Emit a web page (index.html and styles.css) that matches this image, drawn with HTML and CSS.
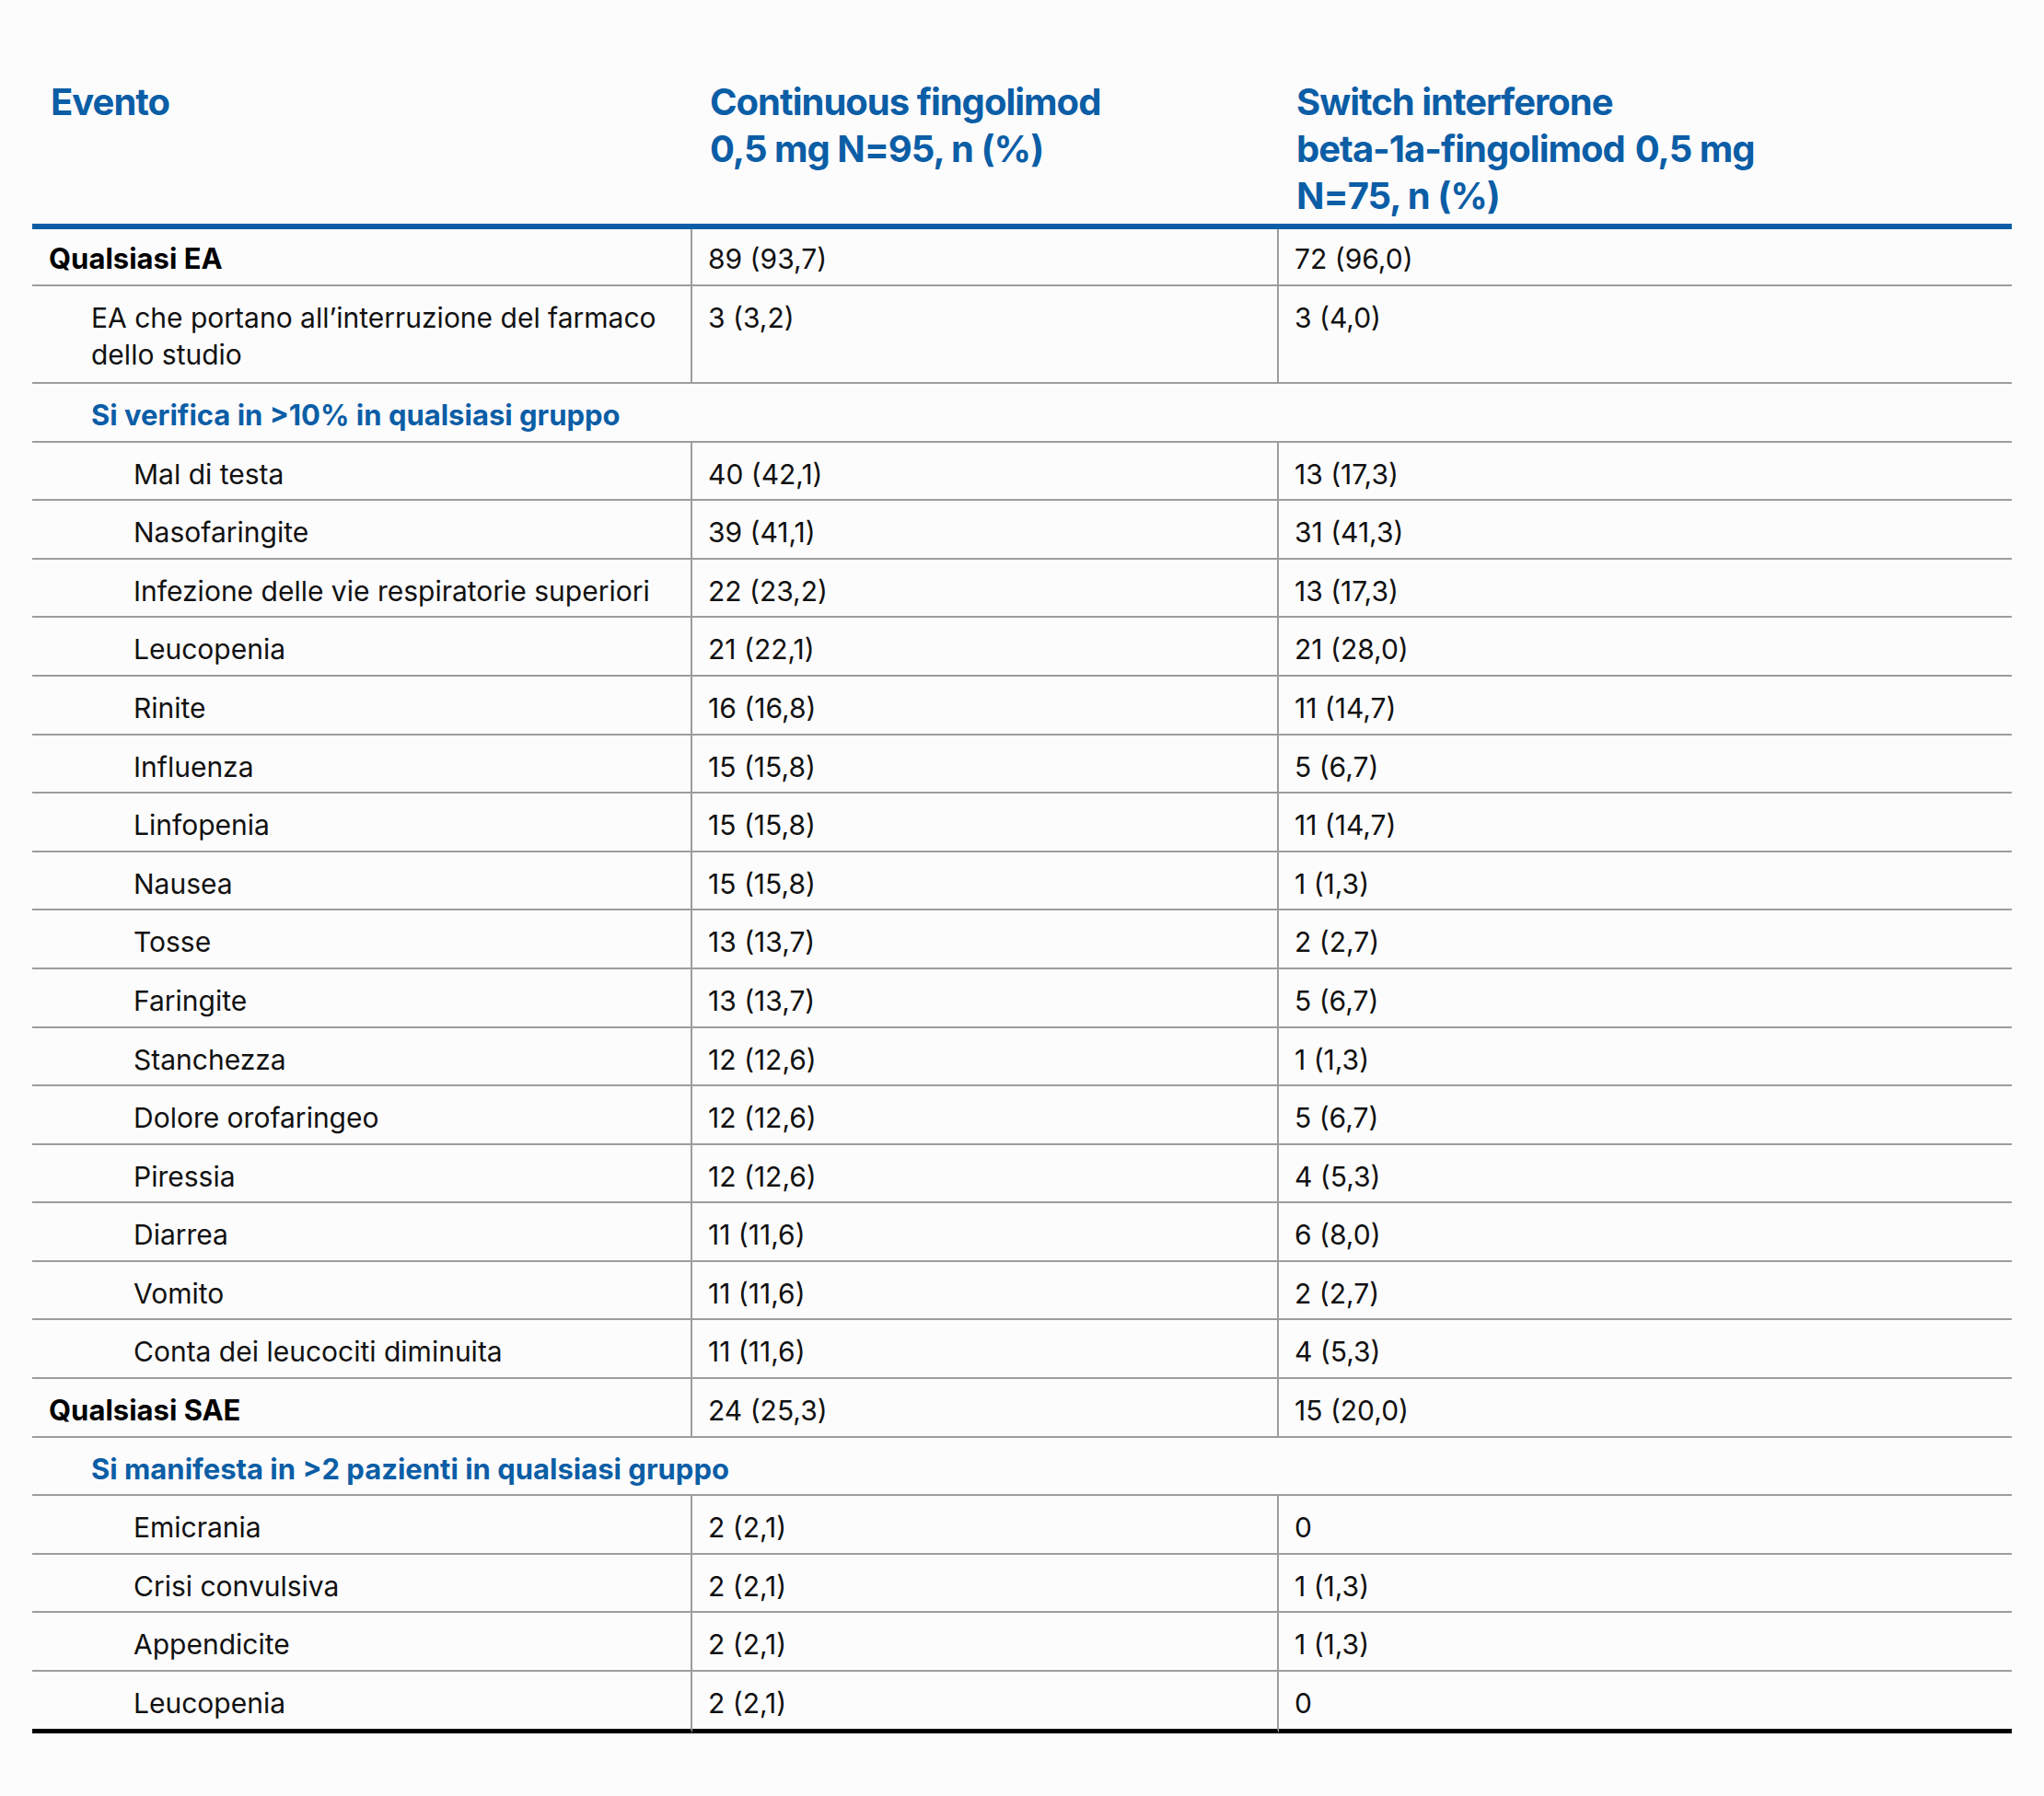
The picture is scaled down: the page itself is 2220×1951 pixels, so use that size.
FILE: index.html
```html
<!DOCTYPE html>
<html lang="it">
<head>
<meta charset="utf-8">
<title>Eventi avversi</title>
<link rel="stylesheet" href="styles.css">
</head>
<body>
<div class="page">
<table class="ae">
<colgroup><col class="w1"><col class="w2"><col class="w3"></colgroup>
<thead>
<tr>
<th>Evento</th>
<th>Continuous fingolimod<br>0,5 mg N=95, n (%)</th>
<th>Switch interferone<br>beta-1a-fingolimod<span class="gap"> </span>0,5 mg<br>N=75, n (%)</th>
</tr>
</thead>
<tbody>
<tr class="first"><td class="c b">Qualsiasi EA</td><td class="c">89 (93,7)</td><td>72 (96,0)</td></tr>
<tr class="two"><td class="c l1">EA che portano all’interruzione del farmaco dello studio</td><td class="c">3 (3,2)</td><td>3 (4,0)</td></tr>
<tr><td class="sec l1" colspan="3">Si verifica in &gt;10% in qualsiasi gruppo</td></tr>
<tr><td class="c l2">Mal di testa</td><td class="c">40 (42,1)</td><td>13 (17,3)</td></tr>
<tr><td class="c l2">Nasofaringite</td><td class="c">39 (41,1)</td><td>31 (41,3)</td></tr>
<tr><td class="c l2">Infezione delle vie respiratorie superiori</td><td class="c">22 (23,2)</td><td>13 (17,3)</td></tr>
<tr><td class="c l2">Leucopenia</td><td class="c">21 (22,1)</td><td>21 (28,0)</td></tr>
<tr><td class="c l2">Rinite</td><td class="c">16 (16,8)</td><td>11 (14,7)</td></tr>
<tr><td class="c l2">Influenza</td><td class="c">15 (15,8)</td><td>5 (6,7)</td></tr>
<tr><td class="c l2">Linfopenia</td><td class="c">15 (15,8)</td><td>11 (14,7)</td></tr>
<tr><td class="c l2">Nausea</td><td class="c">15 (15,8)</td><td>1 (1,3)</td></tr>
<tr><td class="c l2">Tosse</td><td class="c">13 (13,7)</td><td>2 (2,7)</td></tr>
<tr><td class="c l2">Faringite</td><td class="c">13 (13,7)</td><td>5 (6,7)</td></tr>
<tr><td class="c l2">Stanchezza</td><td class="c">12 (12,6)</td><td>1 (1,3)</td></tr>
<tr><td class="c l2">Dolore orofaringeo</td><td class="c">12 (12,6)</td><td>5 (6,7)</td></tr>
<tr><td class="c l2">Piressia</td><td class="c">12 (12,6)</td><td>4 (5,3)</td></tr>
<tr><td class="c l2">Diarrea</td><td class="c">11 (11,6)</td><td>6 (8,0)</td></tr>
<tr><td class="c l2">Vomito</td><td class="c">11 (11,6)</td><td>2 (2,7)</td></tr>
<tr><td class="c l2">Conta dei leucociti diminuita</td><td class="c">11 (11,6)</td><td>4 (5,3)</td></tr>
<tr><td class="c b">Qualsiasi SAE</td><td class="c">24 (25,3)</td><td>15 (20,0)</td></tr>
<tr><td class="sec l1" colspan="3">Si manifesta in &gt;2 pazienti in qualsiasi gruppo</td></tr>
<tr><td class="c l2">Emicrania</td><td class="c">2 (2,1)</td><td>0</td></tr>
<tr><td class="c l2">Crisi convulsiva</td><td class="c">2 (2,1)</td><td>1 (1,3)</td></tr>
<tr><td class="c l2">Appendicite</td><td class="c">2 (2,1)</td><td>1 (1,3)</td></tr>
<tr class="last"><td class="c l2">Leucopenia</td><td class="c">2 (2,1)</td><td>0</td></tr>
</tbody>
</table>
</div>
</body>
</html>
```

FILE: styles.css
```css
html, body {
  margin: 0;
  padding: 0;
  background: #fdfcfd;
}

.page {
  padding: 85px 35px 0 35px;
  font-family: Inter, "Liberation Sans", sans-serif;
  color: #111;
}

.ae {
  width: 2150px;
  table-layout: fixed;
  border-collapse: separate;
  border-spacing: 0;
}

.w1 { width: 717px; }
.w2 { width: 637px; }
.w3 { width: 796px; }

.ae th {
  text-align: left;
  vertical-align: top;
  font-size: 40px;
  font-weight: 700;
  line-height: 51px;
  letter-spacing: -1px;
  color: #0b5ea6;
  padding: 0 18px 5px 20px;
  border-bottom: 6px solid #0b5ea6;
}

.ae th + th {
  padding-left: 19px;
}

.ae th .gap {
  display: inline-block;
  width: 11px;
}

.ae td {
  font-size: 30px;
  line-height: 40px;
  letter-spacing: 0;
  vertical-align: top;
  padding: 14px 17px 7.6px 17px;
  border-bottom: 2px solid #9d9d9d;
}

.ae tr.first td {
  padding-top: 12px;
}

.ae tr.two td {
  padding-bottom: 10.4px;
}

.ae td.c {
  border-right: 2px solid #9d9d9d;
}

.ae td.b {
  font-size: 31px;
  font-weight: 700;
  color: #000;
  padding-left: 18px;
}

.ae td.l1 { padding-left: 64px; }
.ae td.l2 { padding-left: 110px; }

.ae td.sec {
  font-size: 31px;
  font-weight: 700;
  color: #0b5ea6;
}

.ae tr.last td {
  border-bottom: 5px solid #000;
}
```
